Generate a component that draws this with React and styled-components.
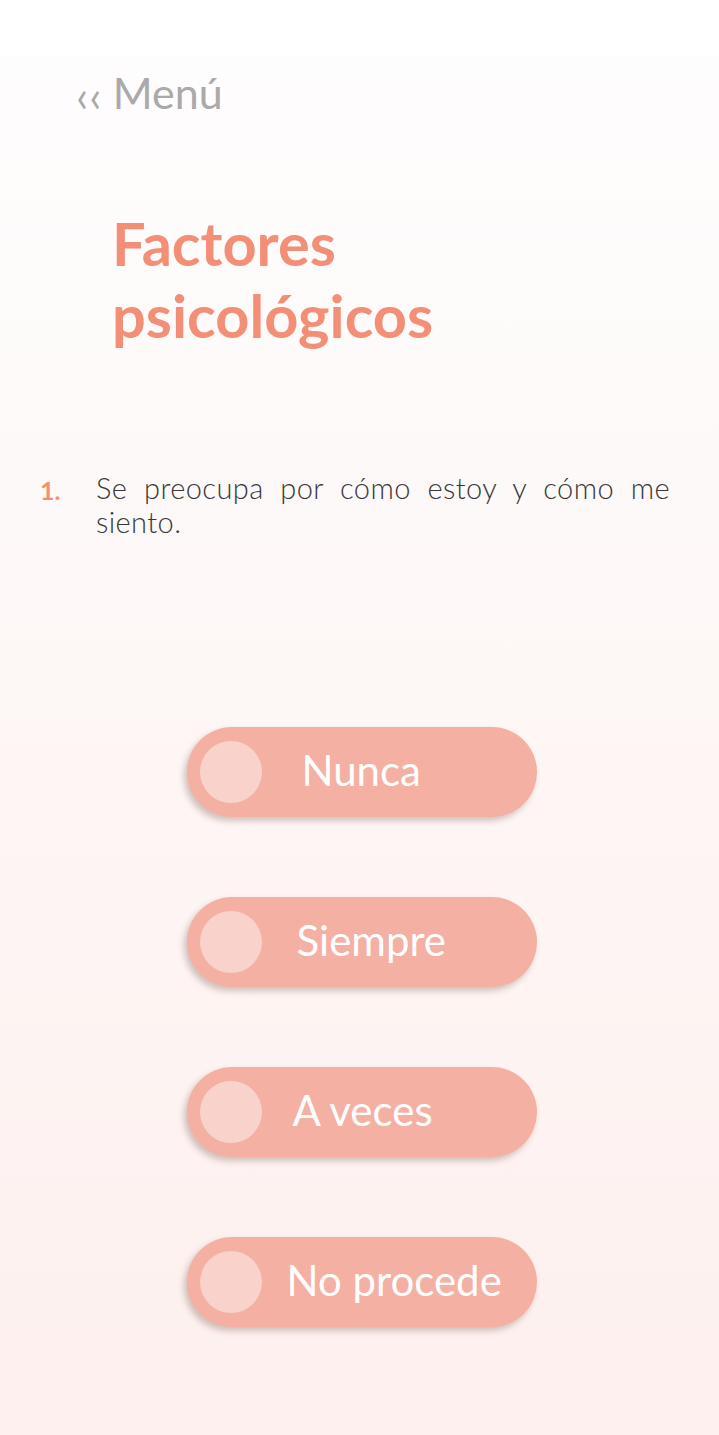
import React from 'react'
import styled, { createGlobalStyle } from 'styled-components'

const GlobalStyle = createGlobalStyle`
  html, body {
    margin: 0;
    padding: 0;
  }
  body {
    font-family: Lato, 'Open Sans', sans-serif;
    background: #fff;
  }
`

const Screen = styled.div`
  min-height: 1435px;
  width: 719px;
  box-sizing: border-box;
  padding-top: 66px;
  background: linear-gradient(180deg, #fff 0px, #fff 52px, #fefdfd 60px, #fdf0ee 1435px);
  display: flex;
  flex-direction: column;
`

const BackLink = styled.a`
  display: flex;
  align-items: center;
  gap: 10px;
  margin-left: 76px;
  color: #aaaaaa;
  font-size: 43px;
  line-height: 50px;
  text-decoration: none;
`

const Chevrons = styled.span`
  font-size: 44px;
  letter-spacing: 1px;
  margin-top: 4px;
`

const Title = styled.h1`
  margin: 87px 0 0 112px;
  font-size: 59.5px;
  line-height: 72px;
  font-weight: 700;
  color: #f28f76;
`

const Question = styled.div`
  display: flex;
  margin: 120px 49px 0 40px;
`

const Number = styled.span`
  width: 56px;
  flex-shrink: 0;
  color: #f28f76;
  font-weight: 700;
  font-size: 25px;
  line-height: 34px;
  padding-top: 2px;
`

const QuestionText = styled.p`
  margin: 0;
  flex: 1;
  font-weight: 300;
  font-size: 29px;
  letter-spacing: 0.4px;
  line-height: 34px;
  color: #383838;
  text-align: justify;
`

const Options = styled.div`
  display: flex;
  flex-direction: column;
  align-items: center;
  gap: 80px;
  margin-top: 188px;
  padding-left: 4px;
`

const Option = styled.button`
  width: 350px;
  height: 90px;
  border: 0;
  border-radius: 45px;
  background: #f4b0a2;
  box-shadow: -3px 4px 6px rgba(110, 70, 60, 0.3);
  display: flex;
  align-items: center;
  padding: 0 0 0 13px;
  cursor: pointer;
  font-family: Lato, 'Open Sans', sans-serif;
`

const Knob = styled.span`
  width: 62px;
  height: 62px;
  border-radius: 50%;
  background: #f9d2cb;
  flex-shrink: 0;
`

const Label = styled.span`
  margin-left: ${p => p.$offset}px;
  padding-bottom: 5px;
  color: #fff;
  font-size: 42px;
  line-height: 50px;
  font-weight: 400;
  white-space: nowrap;
`

const options = [
  { label: 'Nunca', offset: 40 },
  { label: 'Siempre', offset: 35 },
  { label: 'A veces', offset: 31 },
  { label: 'No procede', offset: 25 }
]

export default function App () {
  return (
    <Screen>
      <GlobalStyle />
      <BackLink href='#'>
        <Chevrons>‹‹</Chevrons>
        Menú
      </BackLink>
      <Title>
        Factores<br />psicológicos
      </Title>
      <Question>
        <Number>1.</Number>
        <QuestionText>Se preocupa por cómo estoy y cómo me siento.</QuestionText>
      </Question>
      <Options>
        {options.map(o => (
          <Option key={o.label}>
            <Knob />
            <Label $offset={o.offset}>{o.label}</Label>
          </Option>
        ))}
      </Options>
    </Screen>
  )
}
